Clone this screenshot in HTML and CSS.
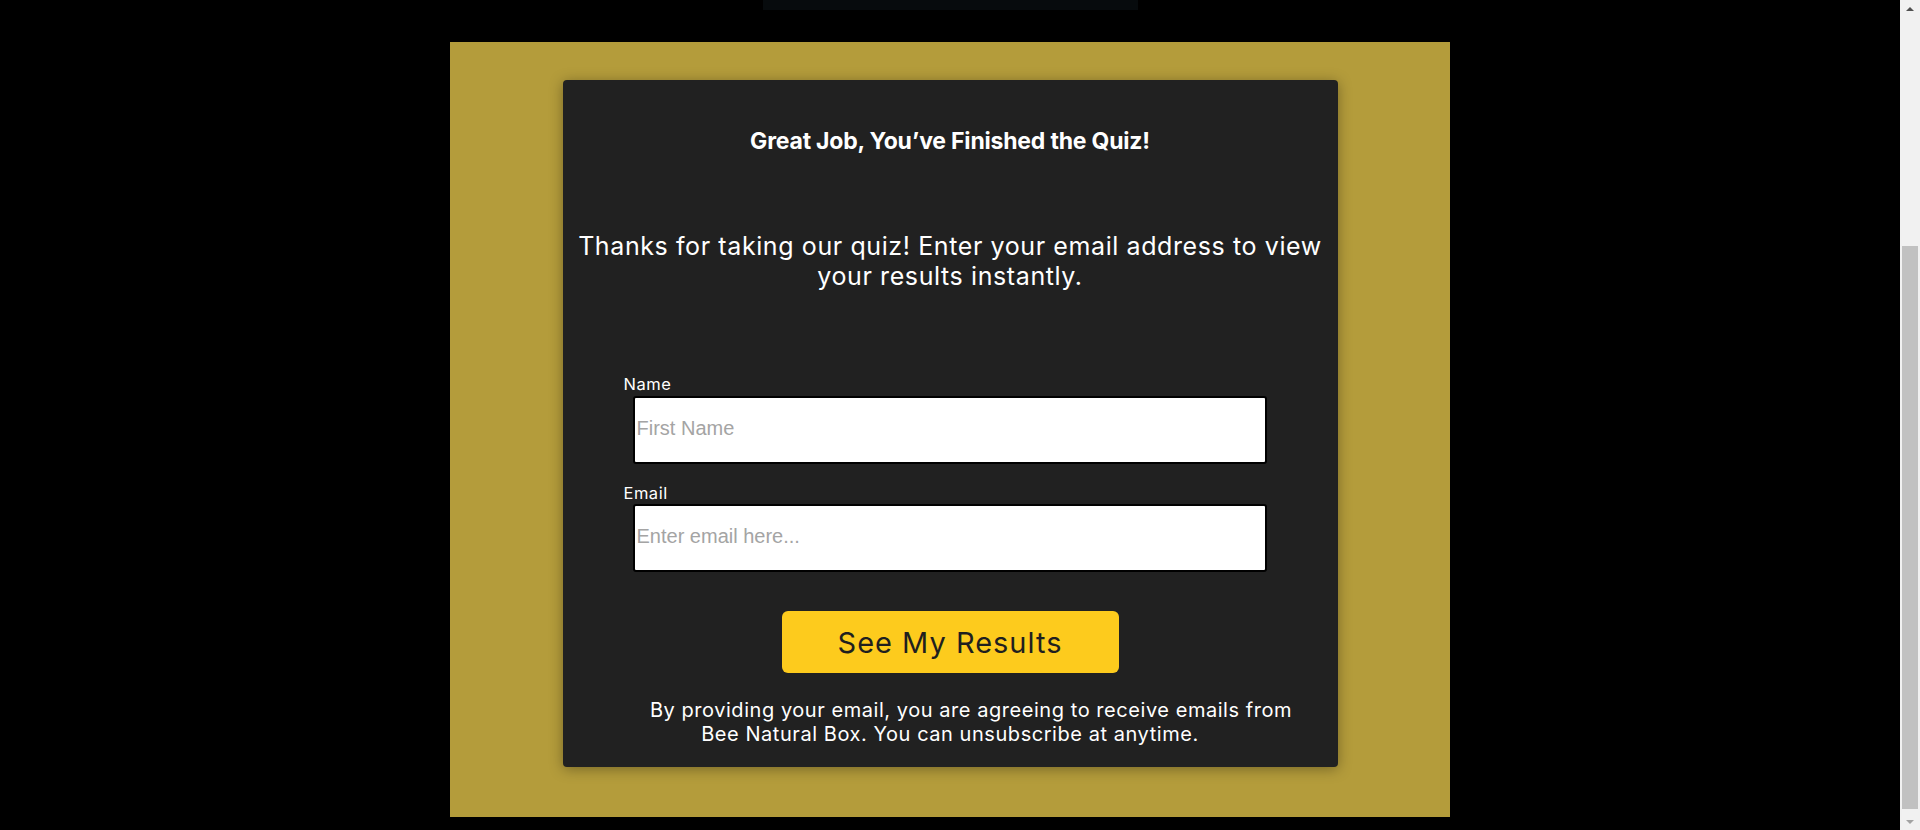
FILE: index.html
```html
<!DOCTYPE html>
<html lang="en">
<head>
<meta charset="utf-8">
<title>Quiz Results</title>
<link rel="stylesheet" href="styles.css">
</head>
<body>
<div class="page">
  <main class="main">
    <div class="top-bar"></div>
    <section class="gold">
      <div class="card">
        <h1 class="title">Great Job, You’ve Finished the Quiz!</h1>
        <p class="lead">Thanks for taking our quiz! Enter your email address to view your results instantly.</p>
        <form class="form">
          <label class="label" for="name">Name</label>
          <input class="field" id="name" type="text" placeholder="First Name">
          <label class="label label-email" for="email">Email</label>
          <input class="field" id="email" type="email" placeholder="Enter email here...">
        </form>
        <div class="actions">
          <button class="btn" type="button">See My Results</button>
        </div>
        <p class="note"><span class="note-first">By providing your email, you are agreeing to receive emails from</span><br>Bee Natural Box. You can unsubscribe at anytime.</p>
      </div>
    </section>
  </main>
  <div class="scrollbar">
    <div class="sb-btn"><span class="arrow-up"></span></div>
    <div class="sb-gap-top"></div>
    <div class="sb-thumb"></div>
    <div class="sb-gap-bottom"></div>
    <div class="sb-btn"><span class="arrow-down"></span></div>
  </div>
</div>
</body>
</html>
```
FILE: styles.css
```css
html, body {
  margin: 0;
  padding: 0;
  height: 100%;
  overflow: hidden;
  background: #000;
}
.page {
  display: flex;
  height: 830px;
  width: 1920px;
}
.main {
  flex: 1;
  display: flex;
  flex-direction: column;
  align-items: center;
  background: #000;
  font-family: Inter, "Noto Sans", sans-serif;
  color: #fff;
}
.top-bar {
  width: 375px;
  height: 10px;
  background: #070b0d;
}
.gold {
  margin-top: 32px;
  width: 1000px;
  height: 775px;
  box-sizing: border-box;
  padding-top: 38px;
  background: #b49c3b;
  display: flex;
  justify-content: center;
}
.card {
  width: 775px;
  height: 687px;
  box-sizing: border-box;
  padding-top: 47px;
  background: #212121;
  border-radius: 4px;
  box-shadow: 0 2px 14px rgba(0, 0, 0, 0.35);
}
.title {
  margin: 0;
  font-size: 23px;
  line-height: 28px;
  font-weight: 700;
  letter-spacing: -0.2px;
  text-align: center;
}
.lead {
  margin: 76px 0 0;
  padding: 0 10px;
  font-size: 25px;
  line-height: 30px;
  font-weight: 400;
  letter-spacing: 0.6px;
  text-align: center;
}
.form {
  display: flex;
  flex-direction: column;
  margin: 83px 0 0;
  padding: 0 61px;
}
.label {
  font-size: 16.5px;
  line-height: 20px;
  letter-spacing: 0.5px;
}
.label-email {
  margin-top: 19px;
}
.field {
  margin: 2px 10px 0 9px;
  height: 68px;
  box-sizing: border-box;
  border: 2px solid #000;
  border-radius: 3px;
  padding: 0 2px 4px;
  font-family: "Liberation Sans", Arial, sans-serif;
  font-size: 20px;
  background: #fff;
  color: #222;
  outline: none;
}
.label-email + .field {
  margin-top: 1px;
}
.field::placeholder {
  color: #a4a4a4;
}
.actions {
  display: flex;
  justify-content: center;
  margin-top: 39px;
}
.btn {
  width: 337px;
  height: 62px;
  border: none;
  border-radius: 6px;
  background: #fdcb1d;
  color: #1f1f1f;
  font-family: Inter, "Noto Sans", sans-serif;
  font-size: 29px;
  font-weight: 400;
  letter-spacing: 1px;
  padding: 0;
  cursor: pointer;
}
.note {
  margin: 25px 0 0;
  padding: 0 20px;
  font-size: 20px;
  line-height: 24px;
  letter-spacing: 0.55px;
  text-align: center;
}
.note-first {
  padding-left: 42px;
}
.scrollbar {
  width: 20px;
  display: flex;
  flex-direction: column;
  background: #f1f1f1;
}
.sb-btn {
  height: 17px;
  display: flex;
  align-items: center;
  justify-content: center;
}
.arrow-up {
  width: 0;
  height: 0;
  border-left: 4.5px solid transparent;
  border-right: 4.5px solid transparent;
  border-bottom: 4.5px solid #505050;
}
.arrow-down {
  width: 0;
  height: 0;
  border-left: 4.5px solid transparent;
  border-right: 4.5px solid transparent;
  border-top: 4.5px solid #a3a3a3;
}
.sb-gap-top {
  height: 229px;
}
.sb-thumb {
  flex: 1;
  margin: 0 2px;
  background: #c1c1c1;
}
.sb-gap-bottom {
  height: 4px;
}
```
